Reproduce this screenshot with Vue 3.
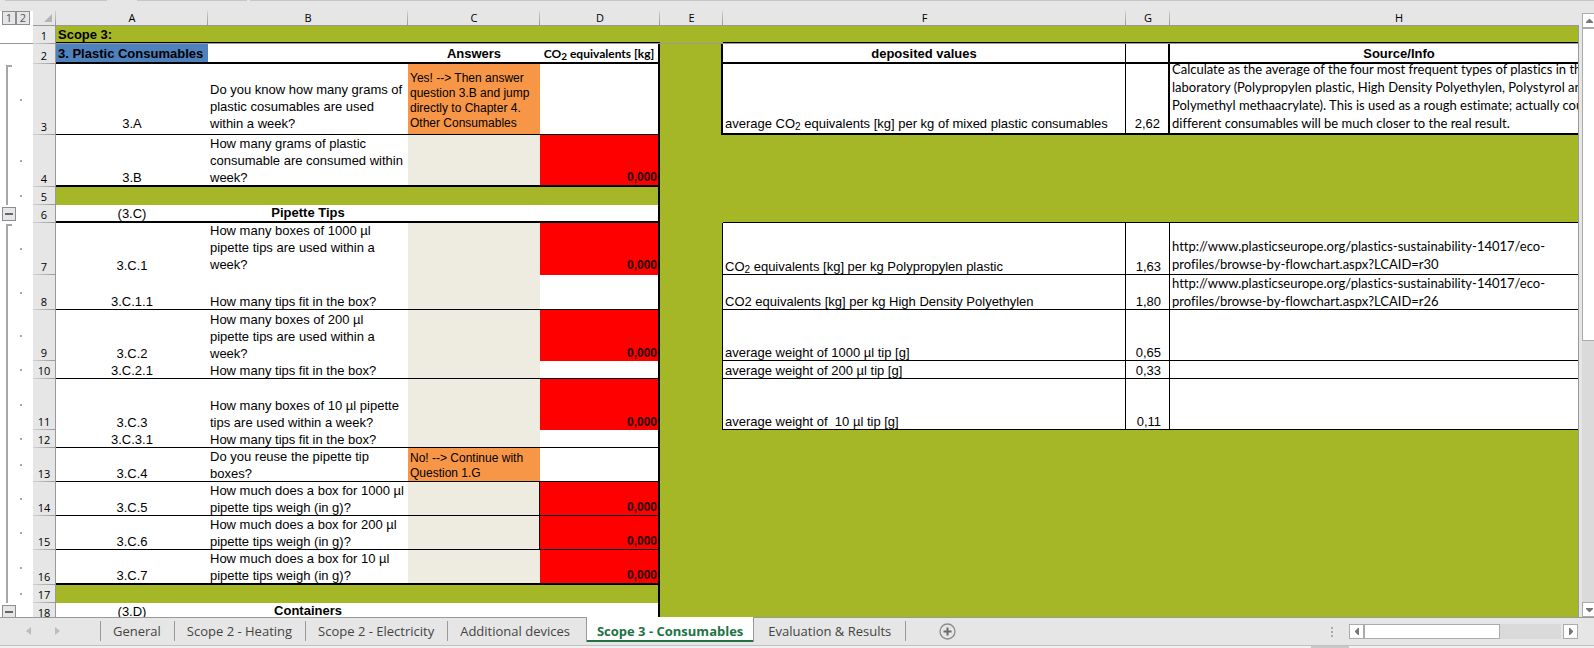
<script setup>
import { ref } from 'vue'

const columns = ['A', 'B', 'C', 'D', 'E', 'F', 'G', 'H']

// Cell shape: t = lines of text, c = class names, href = link target.
// A "₂" inside a line is drawn as a subscript digit.
const green = { c: 'green' }
const G = (c = '') => ({ c: 'green ' + c })
const id = (t, c = 'b1') => ({ t: [t], c: 'center ' + c })
const q = (lines, c = 'b1') => ({ t: lines, c })
const red = (c = '') => ({ t: ['0,000'], c: 'red ' + c })
const note = (t, c = 'b1 r1') => ({ t: [t], c })
const val = (t, c = 'b1 r1') => ({ t: [t], c: 'value ' + c })
const info = (lines, c = 'b1', href) => ({ t: lines, c: 'info ' + c, href })

const rows = [
  { h: 18, g: 'freeze', cells: [{ t: ['Scope 3:'], c: 'green title cut' }, G('cut'), G('cut'), G('cut'), G('cutplain'), G('cut'), G('cut'), G('cut')] },
  { h: 20, cells: [
    { t: ['3. Plastic Consumables'], c: 'blue title b2' }, { c: 'b2' },
    { t: ['Answers'], c: 'title center b2' },
    { t: ['CO₂ equivalents [kg]'], c: 'kg center b2 r2' },
    G('r2'),
    { t: ['deposited values'], c: 'title center b2 r1' }, { c: 'b2 r2' },
    { t: ['Source/Info'], c: 'title center b2' }] },
  { h: 71, g: 'line start', cells: [
    id('3.A', 'b1 lift'), q(['Do you know how many grams of', 'plastic cosumables are used', 'within a week?'], 'b1 lift'),
    { t: ['Yes! --> Then answer', 'question 3.B and jump', 'directly to Chapter 4.', 'Other Consumables'], c: 'orange b1 lift' },
    { c: 'b1 r2' }, G('r2'),
    note('average CO₂ equivalents [kg] per kg of mixed plastic consumables', 'b2 r1 nudge'),
    val('2,62', 'b2 r2 nudge'),
    info(['Calculate as the average of the four most frequent types of plastics in the', 'laboratory (Polypropylen plastic, High Density Polyethylen, Polystyrol and', 'Polymethyl methaacrylate). This is used as a rough estimate; actually counting the', 'different consumables will be much closer to the real result.'], 'b2 nudge')] },
  { h: 52, g: 'line', cells: [id('3.B', 'b2'), q(['How many grams of plastic', 'consumable are consumed within', 'week?'], 'b2'), { c: 'beige b2' }, red('b2 r2'), green, green, green, green] },
  { h: 18, g: 'line', cells: [green, green, green, G('r2'), green, green, green, green] },
  { h: 18, g: 'toggle', cells: [id('(3.C)', 'b2'), { t: ['Pipette Tips'], c: 'title center b2' }, { c: 'b2' }, { c: 'b2 r2' }, green, G('b1'), G('b1'), G('b1')] },
  { h: 52, g: 'line start', cells: [id('3.C.1', 'nudge'), q(['How many boxes of 1000 µl', 'pipette tips are used within a', 'week?'], 'lift'), { c: 'beige' }, red('r2 nudge'), G('r1'), note('CO₂ equivalents [kg] per kg Polypropylen plastic'), val('1,63'), info(['http://www.plasticseurope.org/plastics-sustainability-14017/eco-', 'profiles/browse-by-flowchart.aspx?LCAID=r30'], 'b1 nudge', 'http://www.plasticseurope.org/plastics-sustainability-14017/eco-profiles/browse-by-flowchart.aspx?LCAID=r30')] },
  { h: 35, g: 'line', cells: [id('3.C.1.1'), q(['How many tips fit in the box?']), { c: 'beige b1' }, { c: 'b1 r2' }, G('r1'), note('CO2 equivalents [kg] per kg High Density Polyethylen'), val('1,80'), info(['http://www.plasticseurope.org/plastics-sustainability-14017/eco-', 'profiles/browse-by-flowchart.aspx?LCAID=r26'], 'b1', 'http://www.plasticseurope.org/plastics-sustainability-14017/eco-profiles/browse-by-flowchart.aspx?LCAID=r26')] },
  { h: 51, g: 'line', cells: [id('3.C.2', ''), q(['How many boxes of 200 µl', 'pipette tips are used within a', 'week?'], ''), { c: 'beige' }, red('r2'), G('r1'), note('average weight of 1000 µl tip [g]'), val('0,65'), { c: 'b1' }] },
  { h: 18, g: 'line', cells: [id('3.C.2.1'), q(['How many tips fit in the box?']), { c: 'beige b1' }, { c: 'b1 r2' }, G('r1'), note('average weight of 200 µl tip [g]'), val('0,33'), { c: 'b1' }] },
  { h: 51, g: 'line', cells: [id('3.C.3', ''), q(['How many boxes of 10 µl pipette', 'tips are used within a week?'], ''), { c: 'beige' }, red('r2'), G('r1'), note('average weight of  10 µl tip [g]'), val('0,11'), { c: 'b1' }] },
  { h: 18, g: 'line', cells: [id('3.C.3.1'), q(['How many tips fit in the box?']), { c: 'beige b1' }, { c: 'b1 r2' }, green, green, green, green] },
  { h: 34, g: 'line', cells: [id('3.C.4'), q(['Do you reuse the pipette tip', 'boxes?']), { t: ['No! --> Continue with', 'Question 1.G'], c: 'orange b1' }, { c: 'b1 r2' }, green, green, green, green] },
  { h: 34, g: 'line', cells: [id('3.C.5'), q(['How much does a box for 1000 µl', 'pipette tips weigh (in g)?']), { c: 'beige b1 r1' }, red('b1 r2'), green, green, green, green] },
  { h: 34, g: 'line', cells: [id('3.C.6'), q(['How much does a box for 200 µl', 'pipette tips weigh (in g)?']), { c: 'beige b1 r1' }, red('b1 r2'), green, green, green, green] },
  { h: 35, g: 'line', cells: [id('3.C.7', 'b2'), q(['How much does a box for 10 µl', 'pipette tips weigh (in g)?'], 'b2'), { c: 'beige b2' }, red('b2 r2'), green, green, green, green] },
  { h: 18, g: 'line', cells: [green, green, green, G('r2'), green, green, green, green] },
  { h: 18, g: 'toggle', cells: [id('(3.D)', 'b2'), { t: ['Containers'], c: 'title center b2' }, { c: 'b2' }, { c: 'b2 r2' }, green, green, green, green] },
]

const tabs = ['General', 'Scope 2 - Heating', 'Scope 2 - Electricity', 'Additional devices', 'Scope 3 - Consumables', 'Evaluation & Results']
const active = ref(4)
</script>

<template>
  <div class="app">
    <main class="work">
      <section class="sheet">
        <div class="ribbon-edge"><i class="e1"></i><i class="e2"></i><i class="e3"></i></div>
        <div class="viewport">
          <table class="grid">
            <colgroup>
              <col class="w-gutter"><col class="w-num"><col class="w-a"><col class="w-b"><col class="w-c"><col class="w-d"><col class="w-e"><col class="w-f"><col class="w-g"><col>
            </colgroup>
            <thead>
              <tr>
                <td class="levels"><div><button type="button">1</button><button type="button">2</button></div></td>
                <td class="corner"><svg width="8" height="8" viewBox="0 0 8 8"><path d="M8 0V8H0Z" fill="#b4b4b4" /></svg></td>
                <th v-for="c in columns" :key="c" scope="col">{{ c }}</th>
              </tr>
            </thead>
            <tbody>
              <tr v-for="(r, i) in rows" :key="i" :style="{ '--h': r.h + 'px' }">
                <td class="gutter" :class="r.g">
                  <button v-if="r.g === 'toggle'" type="button" class="minus" aria-label="Collapse group"><i></i></button>
                  <i v-else-if="r.g && r.g.startsWith('line')" class="dot"></i>
                </td>
                <th scope="row" class="num">{{ i + 1 }}</th>
                <td v-for="(cell, j) in r.cells" :key="j" class="cell" :class="cell.c">
                  <div v-if="cell.t" class="box">
                    <component :is="cell.href ? 'a' : 'span'" :href="cell.href" class="text">
                      <template v-for="(line, k) in cell.t" :key="k"><br v-if="k"><template v-for="(part, m) in line.split('₂')" :key="m"><sub v-if="m">2</sub>{{ part }}</template></template>
                    </component>
                  </div>
                </td>
              </tr>
            </tbody>
          </table>
        </div>
      </section>
      <div class="vscroll">
        <button type="button" class="sbtn" aria-label="Scroll up"><svg width="7" height="4" viewBox="0 0 7 4"><path d="M3 0H4L7 3V4H0V3Z" fill="#777" /></svg></button>
        <div class="vtrack"><div class="vthumb"></div></div>
        <button type="button" class="sbtn" aria-label="Scroll down"><svg width="7" height="4" viewBox="0 0 7 4"><path d="M0 0H7V1L4 4H3L0 1Z" fill="#777" /></svg></button>
      </div>
    </main>

    <footer class="bar">
      <div class="nav">
        <button type="button" aria-label="Previous sheet"><svg width="5" height="8" viewBox="0 0 5 8"><path d="M5 0V8L0 4Z" fill="#bcbcbc" /></svg></button>
        <button type="button" aria-label="Next sheet"><svg width="5" height="8" viewBox="0 0 5 8"><path d="M0 0V8L5 4Z" fill="#bcbcbc" /></svg></button>
      </div>
      <nav class="tabs">
        <button v-for="(t, i) in tabs" :key="t" type="button" class="tab" :class="{ on: i === active, before: i === active - 1 }" @click="active = i">{{ t }}</button>
      </nav>
      <button type="button" class="add" aria-label="New sheet">
        <svg width="17" height="17" viewBox="0 0 17 17"><circle cx="8.500" cy="8.500" r="7.500" fill="none" stroke="#8a8a8a" stroke-width="1.300" /><path d="M8.500 4.500V12.500M4.500 8.500H12.500" stroke="#6a6a6a" stroke-width="2" /></svg>
      </button>
      <div class="grip"><i></i><i></i><i></i></div>
      <div class="hscroll">
        <button type="button" class="sbtn" aria-label="Scroll left"><svg width="4" height="7" viewBox="0 0 4 7"><path d="M4 0V7H3L0 4V3L3 0Z" fill="#777" /></svg></button>
        <div class="htrack"><div class="hthumb"></div></div>
        <button type="button" class="sbtn" aria-label="Scroll right"><svg width="4" height="7" viewBox="0 0 4 7"><path d="M0 0H1L4 3V4L1 7H0Z" fill="#777" /></svg></button>
      </div>
    </footer>
    <div class="status"><i></i></div>
  </div>
</template>

<style>
html, body { margin: 0; background: #e6e6e6; }
</style>

<style scoped>
* { box-sizing: border-box; }
button { margin: 0; padding: 0; border: 0; background: none; font: inherit; color: inherit; }
.app {
  display: flex; flex-direction: column; height: 100vh; overflow: hidden;
  background: #e6e6e6; color: #000; font-family: "Liberation Sans", Arial, sans-serif; font-size: 13px;
}
.work { flex: 1; min-height: 0; display: flex; }
.sheet { flex: 1; min-width: 0; display: flex; flex-direction: column; }
.ribbon-edge { display: flex; height: 11px; margin-right: -15px; }
.ribbon-edge i { height: 1px; background: #c6c6c6; }
.e1 { width: 102px; margin-left: 5px; }
.e2 { width: 110px; margin-left: 30px; }
.e3 { flex: 1; margin-left: 3px; }
.viewport {
  flex: 1; min-height: 0; display: flex; overflow: hidden; padding-right: 1px;
  background: linear-gradient(#999, #999) right 14px / 1px 100% no-repeat;
}
.grid {
  flex: none; width: calc(100% + 50px); height: 0; table-layout: fixed;
  border-collapse: separate; border-spacing: 0; margin-right: -50px; clip-path: inset(0 50px 0 0);
}
.w-gutter { width: 33px; }
.w-num { width: 23px; }
.w-a { width: 152px; }
.w-b { width: 200px; }
.w-c { width: 132px; }
.w-d { width: 120px; }
.w-e { width: 63px; }
.w-f { width: 403px; }
.w-g { width: 44px; }

td, th { padding: 0; }
thead td, thead th { height: 15px; }
thead th, .corner {
  background: linear-gradient(#d0d0d0, #999) right / 1px 100% no-repeat #e6e6e6;
  border-bottom: 1px solid #999; font: 11px/14px "Open Sans", "Noto Sans", sans-serif; text-align: center;
}
.levels { background: #fff; }
.levels div { display: flex; padding-left: 2px; height: 15px; }
.levels button { width: 14px; height: 14px; border: 1px solid #8a8d94; background: #e6e6e6; font: 11px/12px "Open Sans", sans-serif; color: #555; }
.corner { text-align: right; padding-right: 4px; line-height: 10px; }
.corner svg { display: inline-block; }

.gutter { height: var(--h); background: #fff; vertical-align: middle; }
.gutter.freeze { border-bottom: 1px solid #999; }
.gutter.line { background: linear-gradient(#a6a6a6, #a6a6a6) 6px 0 / 2px 100% no-repeat #fff; }
.gutter.start { background: linear-gradient(#a6a6a6, #a6a6a6) 6px 1px / 2px 100% no-repeat, linear-gradient(#a6a6a6, #a6a6a6) 6px 1px / 6px 2px no-repeat #fff; }
.dot { display: block; width: 2px; height: 2px; margin-left: 20px; background: #a6a6a6; }
.minus { display: flex; align-items: center; justify-content: center; width: 14px; height: 14px; margin-left: 2px; background: #e6e6e6; border: 1px solid #8a8d94; }
.minus i { width: 8px; height: 2px; background: #666; }

.num {
  height: var(--h); vertical-align: bottom; font: 11px/17px "Open Sans", "Noto Sans", sans-serif; text-align: center;
  background: linear-gradient(90deg, #d0d0d0, #999) bottom / 100% 1px no-repeat #e6e6e6; border-right: 1px solid #999;
}

.cell { --b: 0px; height: var(--h); vertical-align: bottom; background-color: #fff; }
.b1 { --b: 1px; border-bottom: 1px solid #000; }
.b2 { --b: 2px; border-bottom: 2px solid #000; }
.r1 { border-right: 1px solid #000; }
.r2 { border-right: 2px solid #000; }
.box { display: flex; align-items: flex-end; height: calc(var(--h) - var(--b)); overflow: hidden; padding: 0 2px; }
.text { white-space: pre; line-height: 17px; margin-bottom: -1px; color: inherit; text-decoration: none; }
.center .box { justify-content: center; }
.lift .box { padding-bottom: 3px; }
.nudge .box { padding-bottom: 2px; }
.title { font-weight: bold; }
.title .text { margin-bottom: 0; }
.green { background-color: #a5b626; }
.cut { --b: 2px; border-bottom: 1px solid #999; box-shadow: inset 0 -1px #000; }
.cutplain { --b: 2px; border-bottom: 1px solid #999; }
.blue { background-color: #4f81bd; }
.beige { background-color: #eeece1; }
.orange { background-color: #f79646; }
.orange .text { font-size: 12px; line-height: 15px; margin-bottom: 0; }
.red { background-color: #f00; color: #200; font-weight: bold; font-size: 12px; }
.red .box { justify-content: flex-end; padding-right: 1px; }
.value .box { justify-content: flex-end; padding-right: 8px; }
.kg .text { font: bold 12px/17px Lato, sans-serif; margin-bottom: 0; }
.info .text { font: 13px/18px Lato, sans-serif; font-variant-ligatures: none; }
sub { font-size: 10px; line-height: 0; vertical-align: -2px; }

.vscroll { flex: none; width: 15px; padding: 13px 0 0 3px; display: flex; flex-direction: column; overflow: hidden; }
.sbtn { flex: none; display: flex; align-items: center; justify-content: center; width: 15px; height: 15px; background: #fff; border: 1px solid #ababab; }
.vtrack { flex: 1; width: 15px; background: #dadada; }
.vthumb { height: 54.500%; background: #fff; border: 1px solid #ababab; }

.bar { flex: none; display: flex; height: 28px; border-top: 1px solid #999; padding-right: 16px; }
.nav { display: flex; width: 101px; padding-left: 26px; gap: 24px; border-right: 1px solid #999; margin: 3px 0 4px; }
.nav button { display: flex; align-items: center; }
.tabs { display: flex; }
.tab { margin: 3px 0 4px; padding: 0 13px 1px 12px; border-right: 1px solid #999; font: 13px/20px "Open Sans", "Noto Sans", sans-serif; color: #444; white-space: nowrap; }
.tab.before { padding-right: 15px; border-color: transparent; }
.tab.on { margin: -1px 0 3px; padding: 3px 10px 1px; background: #fff; border: solid #999; border-width: 0 1px; box-shadow: inset 0 -2px #217346; color: #217346; font-weight: bold; }
.tab:last-child { padding: 0 14px 1px; }
.add { display: flex; align-items: center; margin-left: 33px; }
.grip { display: flex; flex-direction: column; justify-content: center; gap: 2px; margin-left: auto; width: 18px; }
.grip i { width: 2px; height: 2px; background: #aaa; }
.hscroll { display: flex; align-items: center; width: 229px; }
.htrack { flex: 1; height: 15px; margin-right: 2px; background: #dadada; }
.hthumb { width: 69%; height: 15px; background: #fff; border: 1px solid #ababab; }
.status { flex: none; height: 3px; border-top: 1px solid #c0c0c0; background: #f1f1f1; display: flex; }
.status i { width: 38px; margin-left: auto; margin-right: 245px; background: #c8c8c8; }
</style>
